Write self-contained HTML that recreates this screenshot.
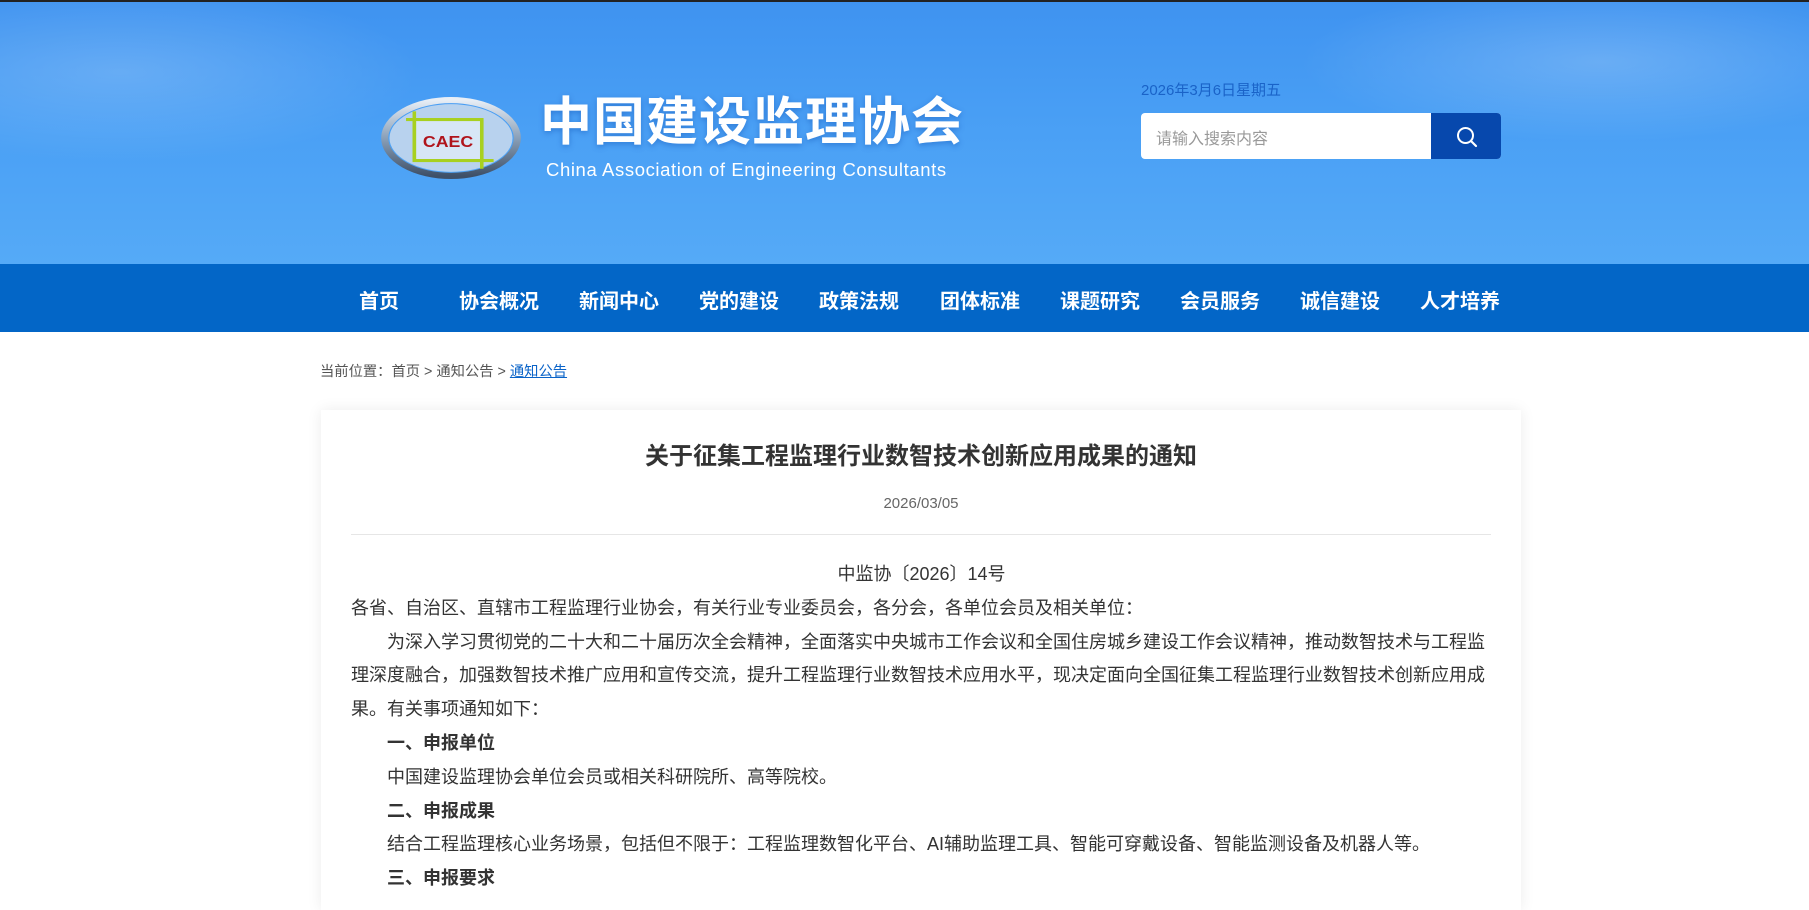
<!DOCTYPE html>
<html><head><meta charset="utf-8"><style>
*{margin:0;padding:0;box-sizing:border-box}
body{width:1809px;height:880px;overflow:hidden;background:#fff;font-family:"Liberation Sans","Noto Sans CJK SC",sans-serif;position:relative}
.hd{position:absolute;left:0;top:0;width:1809px;height:264px;background:linear-gradient(180deg,#3f93f0 0%,#4aa0f5 50%,#55aaf7 100%);border-top:2px solid #222}
.hd:before{content:"";position:absolute;left:0;top:0;right:0;bottom:0;background:radial-gradient(ellipse 300px 90px at 120px 70px,rgba(255,255,255,.18),transparent),radial-gradient(ellipse 300px 80px at 1600px 60px,rgba(255,255,255,.2),transparent)}
.title{position:absolute;left:540px;top:78px;font-size:52px;font-weight:bold;color:#fff;letter-spacing:1px;text-shadow:0 2px 6px rgba(0,60,160,.35);white-space:nowrap}
.sub{position:absolute;left:546px;top:157px;font-size:18.5px;color:#fff;letter-spacing:.6px;white-space:nowrap}
.date{position:absolute;left:1141px;top:77px;font-size:15px;color:#1a63c8}
.sb{position:absolute;left:1141px;top:111px;width:360px;height:46px;background:#fff;border-radius:4px;overflow:hidden}
.sb span{position:absolute;left:15px;top:12px;font-size:16px;color:#999}
.sb .btn{position:absolute;left:290px;top:0;width:70px;height:46px;background:#0748ad}
.nav{position:absolute;left:0;top:264px;width:1809px;height:68px;background:#0366c7}
.nav a{position:absolute;top:21px;font-size:20px;font-weight:bold;color:#fff;transform:translateX(-50%);white-space:nowrap}
.bc{position:absolute;left:320px;top:360px;font-size:14.3px;color:#555}
.bc u{color:#0a63c8}
.card{position:absolute;left:321px;top:410px;width:1200px;height:500px;background:#fff;box-shadow:0 0 14px rgba(0,0,0,.08)}
.h1{position:absolute;width:1200px;top:436px;text-align:center;font-size:24px;font-weight:bold;color:#333}
.dt{position:absolute;top:495px;text-align:center;font-size:15px;color:#666}
.hr{position:absolute;left:351px;top:534px;width:1140px;height:1px;background:#e6e6e6}
.bd{position:absolute;left:351px;top:558px;width:1141px;font-size:18px;line-height:33.8px;color:#333}
.bd p{text-indent:36px}
.bd p.n{text-indent:0}
.bd b{font-weight:bold}
</style></head><body>
<div class="hd">
<svg style="position:absolute;left:380px;top:95px" width="142" height="82" viewBox="0 0 120 80" preserveAspectRatio="none">
<defs><linearGradient id="g" x1="0" y1="0" x2="0" y2="1"><stop offset="0" stop-color="#e8eef6"/><stop offset=".5" stop-color="#8aa0b8"/><stop offset="1" stop-color="#3e5068"/></linearGradient></defs>
<ellipse cx="60" cy="40" rx="56" ry="37" fill="none" stroke="url(#g)" stroke-width="6"/>
<ellipse cx="60" cy="40" rx="52" ry="33" fill="#b8d2ee"/>
<rect x="29" y="22" width="57" height="40" fill="#d7e6f6" stroke="#a8d020" stroke-width="3"/>
<line x1="29" y1="14" x2="29" y2="62" stroke="#a8d020" stroke-width="3"/>
<line x1="86" y1="22" x2="86" y2="70" stroke="#a8d020" stroke-width="3"/>
<line x1="22" y1="22" x2="29" y2="22" stroke="#a8d020" stroke-width="3"/>
<line x1="86" y1="62" x2="96" y2="62" stroke="#a8d020" stroke-width="3"/>
<text x="57.5" y="49" text-anchor="middle" font-family="Liberation Sans" font-weight="bold" font-size="15" fill="#b0141c">CAEC</text>
</svg>
<div class="title">中国建设监理协会</div>
<div class="sub">China Association of Engineering Consultants</div>
<div class="date">2026年3月6日星期五</div>
<div class="sb"><span>请输入搜索内容</span><div class="btn"><svg style="position:absolute;left:24px;top:12px" width="24" height="24" viewBox="0 0 24 24"><circle cx="10.5" cy="10.5" r="7.5" fill="none" stroke="#fff" stroke-width="2"/><line x1="16" y1="16" x2="21" y2="21" stroke="#fff" stroke-width="2.2" stroke-linecap="round"/></svg></div></div>
</div>
<div class="nav">
<a style="left:379px">首页</a><a style="left:499px">协会概况</a><a style="left:619px">新闻中心</a><a style="left:739px">党的建设</a><a style="left:859px">政策法规</a><a style="left:980px">团体标准</a><a style="left:1100px">课题研究</a><a style="left:1220px">会员服务</a><a style="left:1340px">诚信建设</a><a style="left:1460px">人才培养</a>
</div>
<div class="bc">当前位置：首页 &gt; 通知公告 &gt; <u>通知公告</u></div>
<div class="card"></div>
<div class="h1" style="left:321px">关于征集工程监理行业数智技术创新应用成果的通知</div>
<div class="dt" style="left:0;width:1842px">2026/03/05</div>
<div class="hr"></div>
<div class="bd">
<p class="n" style="text-align:center">中监协〔2026〕14号</p>
<p class="n">各省、自治区、直辖市工程监理行业协会，有关行业专业委员会，各分会，各单位会员及相关单位：</p>
<p>为深入学习贯彻党的二十大和二十届历次全会精神，全面落实中央城市工作会议和全国住房城乡建设工作会议精神，推动数智技术与工程监理深度融合，加强数智技术推广应用和宣传交流，提升工程监理行业数智技术应用水平，现决定面向全国征集工程监理行业数智技术创新应用成果。有关事项通知如下：</p>
<p><b>一、申报单位</b></p>
<p>中国建设监理协会单位会员或相关科研院所、高等院校。</p>
<p><b>二、申报成果</b></p>
<p>结合工程监理核心业务场景，包括但不限于：工程监理数智化平台、AI辅助监理工具、智能可穿戴设备、智能监测设备及机器人等。</p>
<p><b>三、申报要求</b></p>
</div>
</body></html>
